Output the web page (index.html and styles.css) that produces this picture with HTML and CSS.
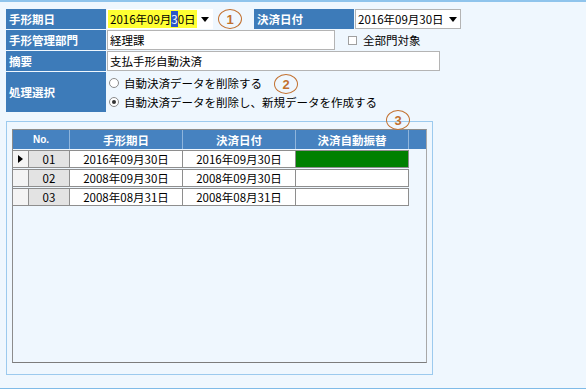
FILE: index.html
```html
<!DOCTYPE html>
<html>
<head>
    <meta charset="utf-8">
    <title>支払手形自動決済</title>
    <link rel="stylesheet" href="styles.css">
</head>
<body>
    <div class="page">
        <div class="form">
            <div class="row">
                <div class="lbl">手形期日</div>
                <div class="combo combo-active">
                    <span class="combo-val">2016年09月<span class="sel">3</span>0日</span>
                    <span class="combo-btn"><i class="tri-down"></i></span>
                </div>
                <div class="mark mark-inline">1</div>
                <div class="lbl">決済日付</div>
                <div class="combo">
                    <span class="combo-val">2016年09月30日</span>
                    <span class="combo-btn"><i class="tri-down"></i></span>
                </div>
            </div>

            <div class="row">
                <div class="lbl">手形管理部門</div>
                <div class="field field-dept">経理課</div>
                <label class="check"><span class="check-box"></span>全部門対象</label>
            </div>

            <div class="row">
                <div class="lbl">摘要</div>
                <div class="field field-memo">支払手形自動決済</div>
            </div>

            <div class="row row-tall">
                <div class="lbl">処理選択</div>
                <div class="radios">
                    <div class="radio"><span class="radio-dot"></span>自動決済データを削除する</div>
                    <div class="radio checked"><span class="radio-dot"></span>自動決済データを削除し、新規データを作成する</div>
                </div>
                <div class="mark mark-two">2</div>
            </div>
        </div>

        <div class="panel">
            <div class="mark mark-three">3</div>
            <div class="grid-box">
                <div class="thead">
                    <div class="th th-no">No.</div>
                    <div class="th">手形期日</div>
                    <div class="th">決済日付</div>
                    <div class="th">決済自動振替</div>
                </div>
                <div class="trow">
                    <div class="td td-ind"><i class="tri-right"></i></div>
                    <div class="td td-no">01</div>
                    <div class="td">2016年09月30日</div>
                    <div class="td">2016年09月30日</div>
                    <div class="td td-on"></div>
                </div>
                <div class="trow">
                    <div class="td td-ind"></div>
                    <div class="td td-no">02</div>
                    <div class="td">2008年09月30日</div>
                    <div class="td">2008年09月30日</div>
                    <div class="td"></div>
                </div>
                <div class="trow">
                    <div class="td td-ind"></div>
                    <div class="td td-no">03</div>
                    <div class="td">2008年08月31日</div>
                    <div class="td">2008年08月31日</div>
                    <div class="td"></div>
                </div>
            </div>
        </div>
    </div>
</body>
</html>
```

FILE: styles.css
```css
* {
    box-sizing: border-box;
}

body {
    margin: 0;
    font-family: "Noto Sans CJK JP", "Liberation Sans", sans-serif;
    font-size: 11.5px;
    color: #000;
    background-color: #eff7fe;
}

.page {
    height: 389px;
    border-top: 2px solid #8fc4ec;
    border-bottom: 1px solid #7fbbe8;
    padding: 7px 0 0 6px;
}

.form {
    display: flex;
    flex-direction: column;
    gap: 1px;
}

.row {
    display: flex;
    align-items: center;
    gap: 1px;
    height: 20px;
    position: relative;
}

.row-tall {
    height: 40px;
    align-items: stretch;
}

.lbl {
    width: 100px;
    height: 100%;
    background-color: #3d7bb9;
    color: white;
    font-weight: bold;
    padding-left: 3px;
    display: flex;
    align-items: center;
    white-space: nowrap;
}

.combo {
    width: 106px;
    height: 20px;
    display: flex;
    background: white;
    border: 1px solid #b4b4b4;
}

.combo-active {
    border-color: transparent;
}

.combo-val {
    flex: 1;
    min-width: 0;
    overflow: hidden;
    padding-left: 2px;
    line-height: 18px;
    white-space: nowrap;
}

.combo-active .combo-val {
    background-color: #ffff33;
}

.sel {
    background-color: #2c56c8;
    color: white;
}

.combo-btn {
    width: 15px;
    flex-shrink: 0;
    display: flex;
    align-items: center;
    justify-content: center;
}

.tri-down {
    width: 0;
    height: 0;
    border-top: 5px solid #000;
    border-left: 4px solid transparent;
    border-right: 4px solid transparent;
}

.mark {
    width: 24px;
    height: 20px;
    border: 1.5px solid #c2702f;
    border-radius: 50%;
    color: #c2702f;
    font-family: "Liberation Sans", sans-serif;
    font-size: 13px;
    font-weight: bold;
    display: flex;
    align-items: center;
    justify-content: center;
}

.mark-inline {
    margin: 0 11px 0 4px;
}

.mark-two {
    position: absolute;
    left: 268px;
    top: 2px;
}

.mark-three {
    position: absolute;
    left: 379px;
    top: -12px;
}

.field {
    height: 20px;
    background: white;
    border: 1px solid #b4b4b4;
    padding-left: 2px;
    line-height: 18px;
}

.field-dept {
    width: 228px;
}

.field-memo {
    width: 333px;
}

.check {
    display: flex;
    align-items: center;
    margin-left: 12px;
    gap: 6px;
}

.check-box {
    width: 9px;
    height: 9px;
    border: 1px solid #a0a0a0;
    background: white;
}

.radios {
    display: flex;
    flex-direction: column;
    padding: 1px 0 0 2px;
}

.radio {
    height: 19px;
    display: flex;
    align-items: center;
    gap: 5px;
    white-space: nowrap;
}

.radio-dot {
    width: 10px;
    height: 10px;
    border: 1px solid #8a8a8a;
    border-radius: 50%;
    background: white;
    display: flex;
    align-items: center;
    justify-content: center;
}

.radio.checked .radio-dot::after {
    content: "";
    width: 4px;
    height: 4px;
    border-radius: 50%;
    background: #333;
}

.panel {
    position: relative;
    width: 427px;
    height: 254px;
    margin-top: 9px;
    border: 1px solid #9ccaee;
    padding: 7px 5px 0 5px;
}

.grid-box {
    height: 234px;
    border: 1px solid #8c8c8c;
    border-right-color: #a8a8a8;
    border-bottom-color: #7c7c7c;
}

.thead {
    display: grid;
    grid-template-columns: 57px 113px 113px 113px;
    height: 19px;
    background-color: #4682c0;
    color: white;
    font-weight: bold;
}

.th {
    display: flex;
    align-items: center;
    justify-content: center;
    border-right: 1px solid #8fb5dc;
}

.th-no {
    font-family: "Liberation Sans", sans-serif;
    font-size: 10px;
}

.trow {
    display: grid;
    grid-template-columns: 16px 41px 113px 113px 113px;
    height: 18px;
    margin-top: 1px;
    border-top: 1px solid #8e8e8e;
    border-bottom: 1px solid #8e8e8e;
    width: 396px;
}

.td {
    display: flex;
    align-items: center;
    justify-content: center;
    background: white;
    border-right: 1px solid #8e8e8e;
    white-space: nowrap;
}

.td-ind {
    background: #f4f4f4;
}

.td-no {
    background: #e3e3e3;
}

.td-on {
    background: #008000;
}

.tri-right {
    width: 0;
    height: 0;
    border-left: 5px solid #000;
    border-top: 4px solid transparent;
    border-bottom: 4px solid transparent;
}
```
